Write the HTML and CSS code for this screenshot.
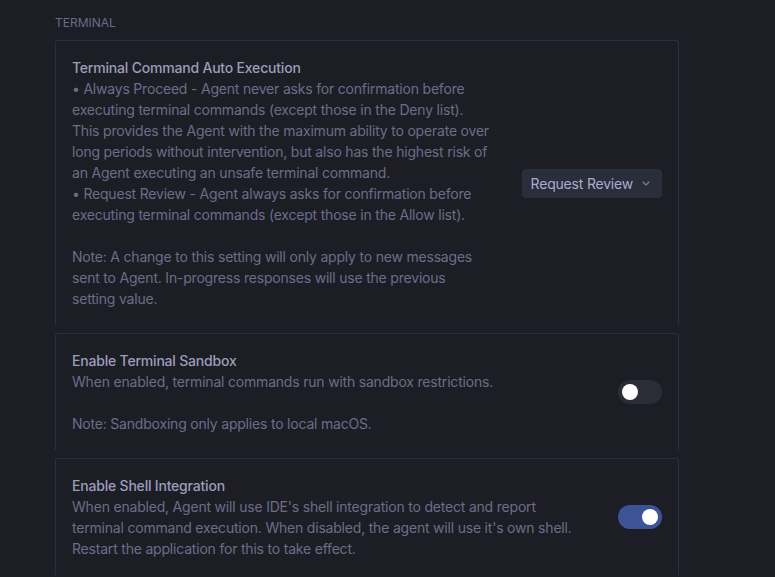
FILE: index.html
```html
<!DOCTYPE html>
<html lang="en">

<head>
  <meta charset="UTF-8">
  <meta name="viewport" content="width=device-width, initial-scale=1.0">
  <title>Settings - Terminal</title>
  <link rel="stylesheet" href="styles.css">
</head>

<body>
  <section class="settings-group">
    <div class="group-label">Terminal</div>

    <div class="setting-card">
      <div class="setting-text">
        <div class="setting-title">Terminal Command Auto Execution</div>
        <p>• Always Proceed - Agent never asks for confirmation before executing terminal commands (except those in the Deny list). This provides the Agent with the maximum ability to operate over long periods without intervention, but also has the highest risk of an Agent executing an unsafe terminal command.<br>• Request Review - Agent always asks for confirmation before executing terminal commands (except those in the Allow list).</p>
        <p class="spaced">Note: A change to this setting will only apply to new messages sent to Agent. In-progress responses will use the previous setting value.</p>
      </div>
      <button class="select">
        Request Review
        <svg width="8" height="5" viewBox="0 0 8 5"><path d="M1 1l3 3 3-3" fill="none" stroke="currentColor" stroke-width="1.1" stroke-linecap="round" stroke-linejoin="round"/></svg>
      </button>
    </div>

    <div class="setting-card">
      <div class="setting-text">
        <div class="setting-title">Enable Terminal Sandbox</div>
        <p>When enabled, terminal commands run with sandbox restrictions.</p>
        <p class="spaced">Note: Sandboxing only applies to local macOS.</p>
      </div>
      <div class="toggle"><span class="knob"></span></div>
    </div>

    <div class="setting-card">
      <div class="setting-text">
        <div class="setting-title">Enable Shell Integration</div>
        <p>When enabled, Agent will use IDE's shell integration to detect and report terminal command execution. When disabled, the agent will use it's own shell. Restart the application for this to take effect.</p>
      </div>
      <div class="toggle on"><span class="knob"></span></div>
    </div>
  </section>
</body>

</html>
```

FILE: styles.css
```css
html,
body {
  margin: 0;
  background-color: #1d1d26;
}

body {
  font-family: Inter, "Noto Sans", sans-serif;
  font-size: 14px;
  line-height: 21px;
  letter-spacing: -0.2px;
  color: #6c6e87;
}

.settings-group {
  width: 624px;
  margin-left: 55px;
  padding-top: 15px;
}

.group-label {
  font-size: 12px;
  line-height: 16px;
  letter-spacing: 0;
  text-transform: uppercase;
  color: #6a6c84;
  margin-bottom: 9px;
}

.setting-card {
  display: flex;
  align-items: center;
  gap: 32px;
  padding: 16px 16px;
  border: 1px solid #2d2e3a;
  border-bottom: 0;
  border-radius: 3px 3px 0 0;
  margin-bottom: 8px;
}

.setting-text {
  flex: 1;
}

.setting-title {
  font-weight: 500;
  color: #9c9eb9;
}

.setting-text p {
  margin: 0;
}

.setting-text p.spaced {
  margin-top: 21px;
}

.select {
  display: flex;
  align-items: center;
  gap: 9px;
  height: 29px;
  padding: 0 12px 0 9px;
  border: 0;
  border-radius: 4px;
  background-color: #2a2e3b;
  color: #a9adcc;
  font-family: inherit;
  font-size: 14px;
  letter-spacing: -0.2px;
  flex: none;
}

.select svg {
  color: #7b7f98;
  margin-top: 1px;
}

.toggle {
  width: 44px;
  height: 24px;
  border-radius: 12px;
  background-color: #2d2d37;
  flex: none;
  display: flex;
  align-items: center;
  padding: 0 4px;
  box-sizing: border-box;
}

.toggle .knob {
  width: 16px;
  height: 16px;
  border-radius: 50%;
  background-color: #fff;
}

.toggle.on {
  background-color: #3c5495;
  justify-content: flex-end;
}
```
